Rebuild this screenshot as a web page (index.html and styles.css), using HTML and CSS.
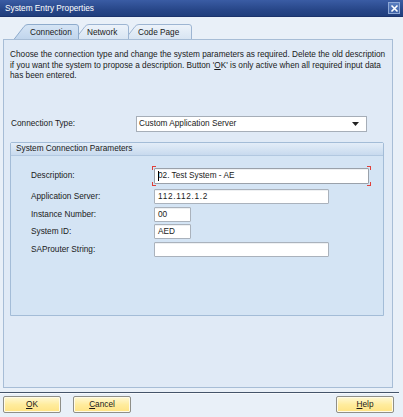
FILE: index.html
```html
<!DOCTYPE html>
<html>
<head>
<meta charset="utf-8">
<link rel="stylesheet" href="styles.css">
</head>
<body>
<div class="titlebar">
  <span class="title">System Entry Properties</span>
  <span class="close"><svg width="9" height="9" viewBox="0 0 9 9"><path d="M1.5 1.5 L7.5 7.5 M7.5 1.5 L1.5 7.5" stroke="#fff" stroke-width="1.6"/></svg></span>
</div>

<div class="tabs">
  <div class="tab tab-active tab-conn">
    <svg viewBox="0 0 66 16" preserveAspectRatio="none"><defs><linearGradient id="ga" x1="0" y1="0" x2="0" y2="1"><stop offset="0" stop-color="#d6e5f5"/><stop offset="1" stop-color="#bfd4ec"/></linearGradient></defs><path d="M0.5 16 L11 2.5 Q12.6 0.5 15 0.5 H63 Q65.5 0.5 65.5 3 V16" fill="url(#ga)" stroke="#8eabcc"/></svg>
    <span>Connection</span>
  </div>
  <div class="tab tab-net">
    <svg viewBox="0 0 55 16" preserveAspectRatio="none"><defs><linearGradient id="gi" x1="0" y1="0" x2="0" y2="1"><stop offset="0" stop-color="#edf3fa"/><stop offset="1" stop-color="#d7e4f2"/></linearGradient></defs><path d="M0.5 16 L11 2.5 Q12.6 0.5 15 0.5 H52 Q54.5 0.5 54.5 3 V16" fill="url(#gi)" stroke="#9db5d2"/></svg>
    <span>Network</span>
  </div>
  <div class="tab tab-code">
    <svg viewBox="0 0 68 16" preserveAspectRatio="none"><path d="M0.5 16 L11 2.5 Q12.6 0.5 15 0.5 H65 Q67.5 0.5 67.5 3 V16" fill="url(#gi)" stroke="#9db5d2"/></svg>
    <span>Code Page</span>
  </div>
</div>

<div class="panel">
  <p class="intro">Choose the connection type and change the system parameters as required. Delete the old description<br>if you want the system to propose a description. Button '<u>O</u>K' is only active when all required input data<br>has been entered.</p>

  <div class="conn-row">
    <span class="label">Connection Type:</span>
    <div class="select">
      <span>Custom Application Server</span>
      <svg width="7" height="4" viewBox="0 0 7 4"><path d="M0 0 H7 L3.5 4 Z" fill="#222"/></svg>
    </div>
  </div>

  <div class="group">
    <div class="group-head">System Connection Parameters</div>
    <div class="group-body">
      <div class="field-row row-desc">
        <span class="label">Description:</span>
        <div class="input input-focus w-long">
          <span class="caret"></span>
          <span>02. Test System - AE</span>
          <i class="corner c-tl"></i><i class="corner c-tr"></i><i class="corner c-bl"></i><i class="corner c-br"></i>
        </div>
      </div>
      <div class="field-row">
        <span class="label">Application Server:</span>
        <div class="input w-mid"><span class="ip">112.112.1.2</span></div>
      </div>
      <div class="field-row">
        <span class="label">Instance Number:</span>
        <div class="input w-short"><span>00</span></div>
      </div>
      <div class="field-row">
        <span class="label">System ID:</span>
        <div class="input w-short"><span>AED</span></div>
      </div>
      <div class="field-row">
        <span class="label">SAProuter String:</span>
        <div class="input w-mid"></div>
      </div>
    </div>
  </div>
</div>

<div class="separator"></div>

<div class="footer">
  <button class="btn"><u>O</u>K</button>
  <button class="btn"><u>C</u>ancel</button>
  <button class="btn btn-help"><u>H</u>elp</button>
</div>
</body>
</html>
```

FILE: styles.css
```css
html, body {
  margin: 0;
  padding: 0;
}
body {
  width: 403px;
  height: 417px;
  overflow: hidden;
  background: #e9f0f8;
  font-family: "Liberation Sans", Arial, sans-serif;
  font-size: 8.25px;
  color: #1a1a1a;
}

.titlebar {
  height: 16px;
  display: flex;
  align-items: center;
  padding: 0 3px 0 5px;
  background: linear-gradient(#3a5ca4, #284789 60%, #203e7d);
  border-bottom: 1px solid #1b336c;
  color: #fff;
}
.title {
  font-size: 8.25px;
}
.close {
  margin-left: auto;
  width: 10px;
  height: 10px;
  border: 1px solid #8ea8d6;
  background: linear-gradient(#5a7fc0, #3f63a8);
  display: flex;
  align-items: center;
  justify-content: center;
}

.tabs {
  display: flex;
  height: 16px;
  margin-top: 7px;
  padding-left: 13px;
}
.tab {
  position: relative;
  height: 16px;
  display: flex;
  align-items: center;
}
.tab svg {
  position: absolute;
  left: 0;
  top: 0;
  width: 100%;
  height: 100%;
}
.tab span {
  position: relative;
  line-height: 16px;
  padding-top: 1px;
}
.tab-conn {
  width: 66px;
  z-index: 3;
}
.tab-conn span { padding-left: 17px; }
.tab-net {
  width: 55px;
  margin-left: -5px;
  z-index: 2;
}
.tab-net span { padding-left: 13px; }
.tab-code {
  width: 68px;
  margin-left: -5px;
  z-index: 1;
}
.tab-code span { padding-left: 14px; }

.panel {
  margin: -1px 10px 0 3px;
  height: 347px;
  border: 1px solid #a7bdd6;
  background: #e0eaf6;
  padding: 0 8px 0 6px;
  position: relative;
  z-index: 4;
}
.intro {
  margin: 0;
  padding-top: 10px;
  line-height: 10.5px;
  white-space: nowrap;
}

.conn-row {
  display: flex;
  align-items: center;
  margin-top: 34px;
  height: 16px;
}
.conn-row .label {
  width: 125px;
  padding-left: 1px;
}
.select {
  height: 14px;
  border: 1px solid #a6aeb8;
  background: #fff;
  display: flex;
  align-items: center;
  padding: 0 7px 0 2px;
  width: 220px;
}
.select svg {
  margin-left: auto;
}

.group {
  margin-top: 10px;
  height: 172px;
  border: 1px solid #a3bcd7;
  background: #d4e4f4;
  border-radius: 2px 2px 0 0;
}
.group-head {
  height: 12px;
  line-height: 12px;
  padding-left: 5px;
  background: linear-gradient(#e3edf8, #c8daee);
  border-bottom: 1px solid #b2c8e0;
}
.group-body {
  padding: 12px 0 0 20px;
  display: flex;
  flex-direction: column;
  gap: 2.5px;
}
.field-row {
  display: flex;
  align-items: center;
  height: 15px;
}
.field-row .label {
  width: 123px;
  flex: none;
}
.row-desc {
  height: 16px;
  margin-bottom: 3px;
}
.input {
  position: relative;
  height: 13px;
  border: 1px solid #aab2bc;
  border-radius: 1px;
  background: #fff;
  display: flex;
  align-items: center;
  padding-left: 3px;
  box-shadow: inset 0 1px 0 #eef0f2;
}
.row-desc .input {
  height: 14px;
}
.input-focus {
  border-color: #9aa1aa;
}
.w-long { width: 210px; }
.w-mid { width: 170px; }
.w-short { width: 32px; }
.ip {
  letter-spacing: 0.7px;
}
.caret {
  position: absolute;
  left: 3px;
  top: 2px;
  width: 1px;
  height: 10px;
  background: #000;
}
.corner {
  position: absolute;
  width: 3px;
  height: 3px;
  border: 0 solid #e0403a;
}
.c-tl { left: -3px; top: -3px; border-left-width: 1.5px; border-top-width: 1.5px; }
.c-tr { right: -3px; top: -3px; border-right-width: 1.5px; border-top-width: 1.5px; }
.c-bl { left: -3px; bottom: -3px; border-left-width: 1.5px; border-bottom-width: 1.5px; }
.c-br { right: -3px; bottom: -3px; border-right-width: 1.5px; border-bottom-width: 1.5px; }

.separator {
  margin: 4px 4px 0 0;
  height: 1px;
  background: #44546a;
  border-bottom: 1px solid #f6f9fc;
}

.footer {
  display: flex;
  gap: 12px;
  padding: 2px 9px 0 3px;
}
.btn {
  width: 58px;
  height: 17px;
  padding: 0;
  border: 1px solid #8f8f88;
  border-radius: 2px;
  background: linear-gradient(#fff9d6, #ffec9e 50%, #ffe382);
  font-family: "Liberation Sans", Arial, sans-serif;
  font-size: 8.25px;
  color: #1a1a1a;
  box-shadow: inset 0 0 0 1px #fffbe8;
}
.btn-help {
  margin-left: auto;
}
```
